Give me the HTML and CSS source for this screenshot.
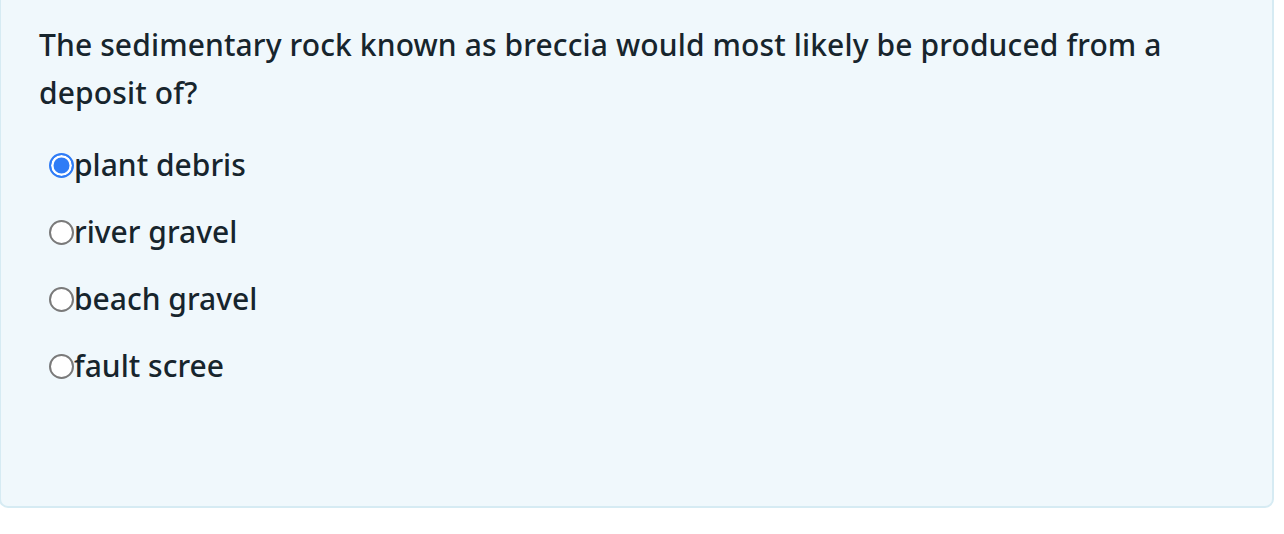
FILE: index.html
```html
<!DOCTYPE html>
<html>
<head>
<meta charset="utf-8">
<link rel="stylesheet" href="styles.css">
</head>
<body>
<div class="card">
  <p class="question">The sedimentary rock known as breccia would most likely be produced from a deposit of?</p>
  <ul class="options">
    <li><label class="option"><input type="radio" name="q" checked><span>plant debris</span></label></li>
    <li><label class="option"><input type="radio" name="q"><span>river gravel</span></label></li>
    <li><label class="option"><input type="radio" name="q"><span>beach gravel</span></label></li>
    <li><label class="option"><input type="radio" name="q"><span>fault scree</span></label></li>
  </ul>
</div>
</body>
</html>
```
FILE: styles.css
```css
html, body {
  margin: 0;
  padding: 0;
  background: #ffffff;
}
body {
  font-family: "Noto Sans", "Open Sans", sans-serif;
  color: #17252d;
}
.card {
  margin: -12px 10px 0 -1px;
  height: 520px;
  box-sizing: border-box;
  background: #f0f8fc;
  border: 2px solid #d6ebf3;
  border-radius: 9px;
  padding: 31px 38px 0 38px;
}
.question {
  margin: 0;
  font-size: 30px;
  font-weight: 500;
  line-height: 48px;
  letter-spacing: 0.12px;
}
.options {
  list-style: none;
  margin: 24px 0 0 0;
  padding: 0 0 0 10px;
  display: flex;
  flex-direction: column;
  gap: 19px;
}
.option {
  display: flex;
  align-items: center;
  font-size: 30px;
  font-weight: 500;
  line-height: 48px;
  letter-spacing: 0;
}
.option input {
  appearance: none;
  -webkit-appearance: none;
  margin: 0;
  width: 25px;
  height: 25px;
  box-sizing: border-box;
  border: 2px solid #7a7a7a;
  border-radius: 50%;
  background: #ffffff;
}
.option input:checked {
  border-color: #2f7cf6;
  background: #2f7cf6;
  box-shadow: inset 0 0 0 2.5px #ffffff;
}
```
